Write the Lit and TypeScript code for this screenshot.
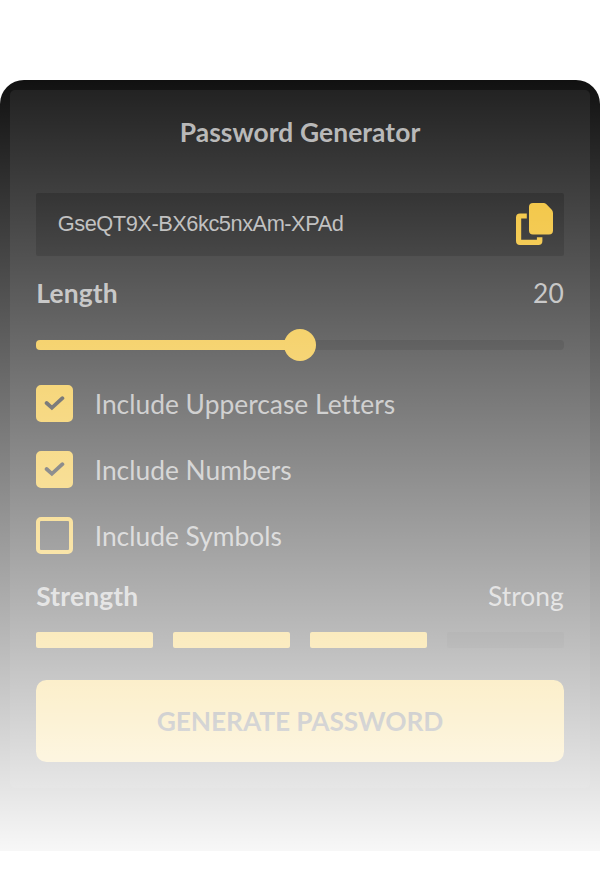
import { LitElement, html, css } from "lit";
import { customElement } from "lit/decorators.js";
import { classMap } from "lit/directives/class-map.js";

@customElement("check-option")
class CheckOption extends LitElement {
  static properties = { label: { type: String }, checked: { type: Boolean } };
  declare label: string;
  declare checked: boolean;

  static styles = css`
    :host {
      display: flex;
      align-items: center;
      gap: 21.4px;
      height: 37px;
      color: #b0b0b0;
      font-size: 26.4px;
    }
    .box {
      box-sizing: border-box;
      width: 37px;
      height: 37px;
      border: 4px solid #f1be2b;
      border-radius: 5px;
      display: grid;
      place-items: center;
    }
    .on {
      background: #f1be2b;
    }
    svg {
      display: block;
    }
    .text {
      line-height: 32px;
      padding-top: 1px;
    }
  `;

  render() {
    return html`
      <span class=${classMap({ box: true, on: this.checked })}>
        ${this.checked
          ? html`<svg width="21" height="17" viewBox="0 0 21 17">
              <path d="M2.6 8 L7.9 12.8 L18.4 3.2" fill="none" stroke="#222" stroke-width="3.8" stroke-linecap="round" />
            </svg>`
          : ""}
      </span>
      <span class="text">${this.label}</span>
    `;
  }
}

@customElement("app-root")
class AppRoot extends LitElement {
  static properties = { password: { state: true }, length: { state: true } };

  password = "GseQT9X-BX6kc5nxAm-XPAd";
  length = 20;
  options = [
    { label: "Include Uppercase Letters", checked: true },
    { label: "Include Numbers", checked: true },
    { label: "Include Symbols", checked: false },
  ];
  bars = [true, true, true, false];

  static styles = css`
    :host {
      display: block;
      box-sizing: border-box;
      min-height: 878px;
      padding-top: 80px;
      background: #fff;
      font-family: Lato, sans-serif;
      font-size: 26.4px;
      font-variant-ligatures: none;
      color: #b4b4b4;
    }
    .frame {
      position: relative;
      box-sizing: border-box;
      height: 771px;
      padding: 10px;
      background: #111;
      border-radius: 24px 24px 0 0;
      overflow: hidden;
    }
    .fade {
      position: absolute;
      inset: 0;
      background: linear-gradient(rgba(255, 255, 255, 0), rgba(255, 255, 255, 0.97));
      pointer-events: none;
    }
    .panel {
      box-sizing: border-box;
      height: 698px;
      padding: 25px 26.3px 0;
      background: #202020;
      border-radius: 5px;
    }
    .title {
      margin: 0;
      font-size: 26.4px;
      letter-spacing: 0.08px;
      font-weight: 700;
      line-height: 34px;
      text-align: center;
    }
    .field {
      box-sizing: border-box;
      display: flex;
      align-items: center;
      justify-content: space-between;
      height: 63px;
      margin-top: 43.5px;
      padding: 0 10.5px 0 21.5px;
      background: #131313;
      border-radius: 2px;
      font-family: "Liberation Sans", Arial, sans-serif;
      font-size: 21.8px;
      letter-spacing: -0.47px;
    }
    .field span {
      margin-top: -1px;
    }
    .row {
      display: flex;
      justify-content: space-between;
      line-height: 34px;
    }
    .strong {
      font-weight: 700;
      letter-spacing: 0.15px;
    }
    .length {
      margin-top: 20.5px;
    }
    .slider {
      display: flex;
      align-items: center;
      height: 32px;
      margin-top: 19px;
    }
    .filled,
    .rest {
      flex: 1;
      height: 10.6px;
      background: #131313;
      border-radius: 0 4px 4px 0;
    }
    .filled {
      background: #f1be2b;
      border-radius: 4px 0 0 4px;
    }
    .thumb {
      width: 32px;
      height: 32px;
      margin: 0 -16px;
      border-radius: 50%;
      background: #f1be2b;
      z-index: 0;
    }
    .options {
      display: grid;
      gap: 29px;
      margin-top: 24px;
    }
    .strength {
      margin-top: 25px;
    }
    .bars {
      display: grid;
      grid-template-columns: repeat(4, 1fr);
      gap: 20.8px;
      margin-top: 19px;
    }
    .bar {
      height: 16px;
      border-radius: 2px;
      background: #131313;
    }
    .lit {
      background: #f1be2b;
    }
    .generate {
      display: block;
      width: 100%;
      height: 82px;
      margin-top: 32px;
      padding: 0;
      border: 0;
      border-radius: 10.5px;
      background: #f1be2b;
      color: #222;
      font: 700 26.4px Lato, sans-serif;
      letter-spacing: -0.12px;
    }
  `;

  render() {
    return html`
      <div class="frame">
        <div class="panel">
          <h1 class="title">Password Generator</h1>
          <div class="field">
            <span>${this.password}</span>
            <svg width="37" height="42" viewBox="0 0 37 42" fill="#f1be2b">
              <path d="M17 0h9.5c2 0 3 .4 4.2 1.6l4.6 4.6c1.3 1.3 1.7 2.4 1.7 4.2V27.5a4 4 0 0 1-4 4H17a4 4 0 0 1-4-4V4a4 4 0 0 1 4-4z" />
              <path d="M4 10.4h6.8v5.2H5.2v21.2h15.7v-2.6h5.5V38a4 4 0 0 1-4 4H4a4 4 0 0 1-4-4V14.4a4 4 0 0 1 4-4z" />
            </svg>
          </div>
          <div class="row length"><span class="strong">Length</span><span>${this.length}</span></div>
          <div class="slider">
            <div class="filled"></div>
            <div class="thumb"></div>
            <div class="rest"></div>
          </div>
          <div class="options">
            ${this.options.map((o) => html`<check-option .label=${o.label} .checked=${o.checked}></check-option>`)}
          </div>
          <div class="row strength"><span class="strong">Strength</span><span>Strong</span></div>
          <div class="bars">${this.bars.map((b) => html`<div class=${classMap({ bar: true, lit: b })}></div>`)}</div>
          <button class="generate">GENERATE PASSWORD</button>
        </div>
        <div class="fade"></div>
      </div>
    `;
  }
}
